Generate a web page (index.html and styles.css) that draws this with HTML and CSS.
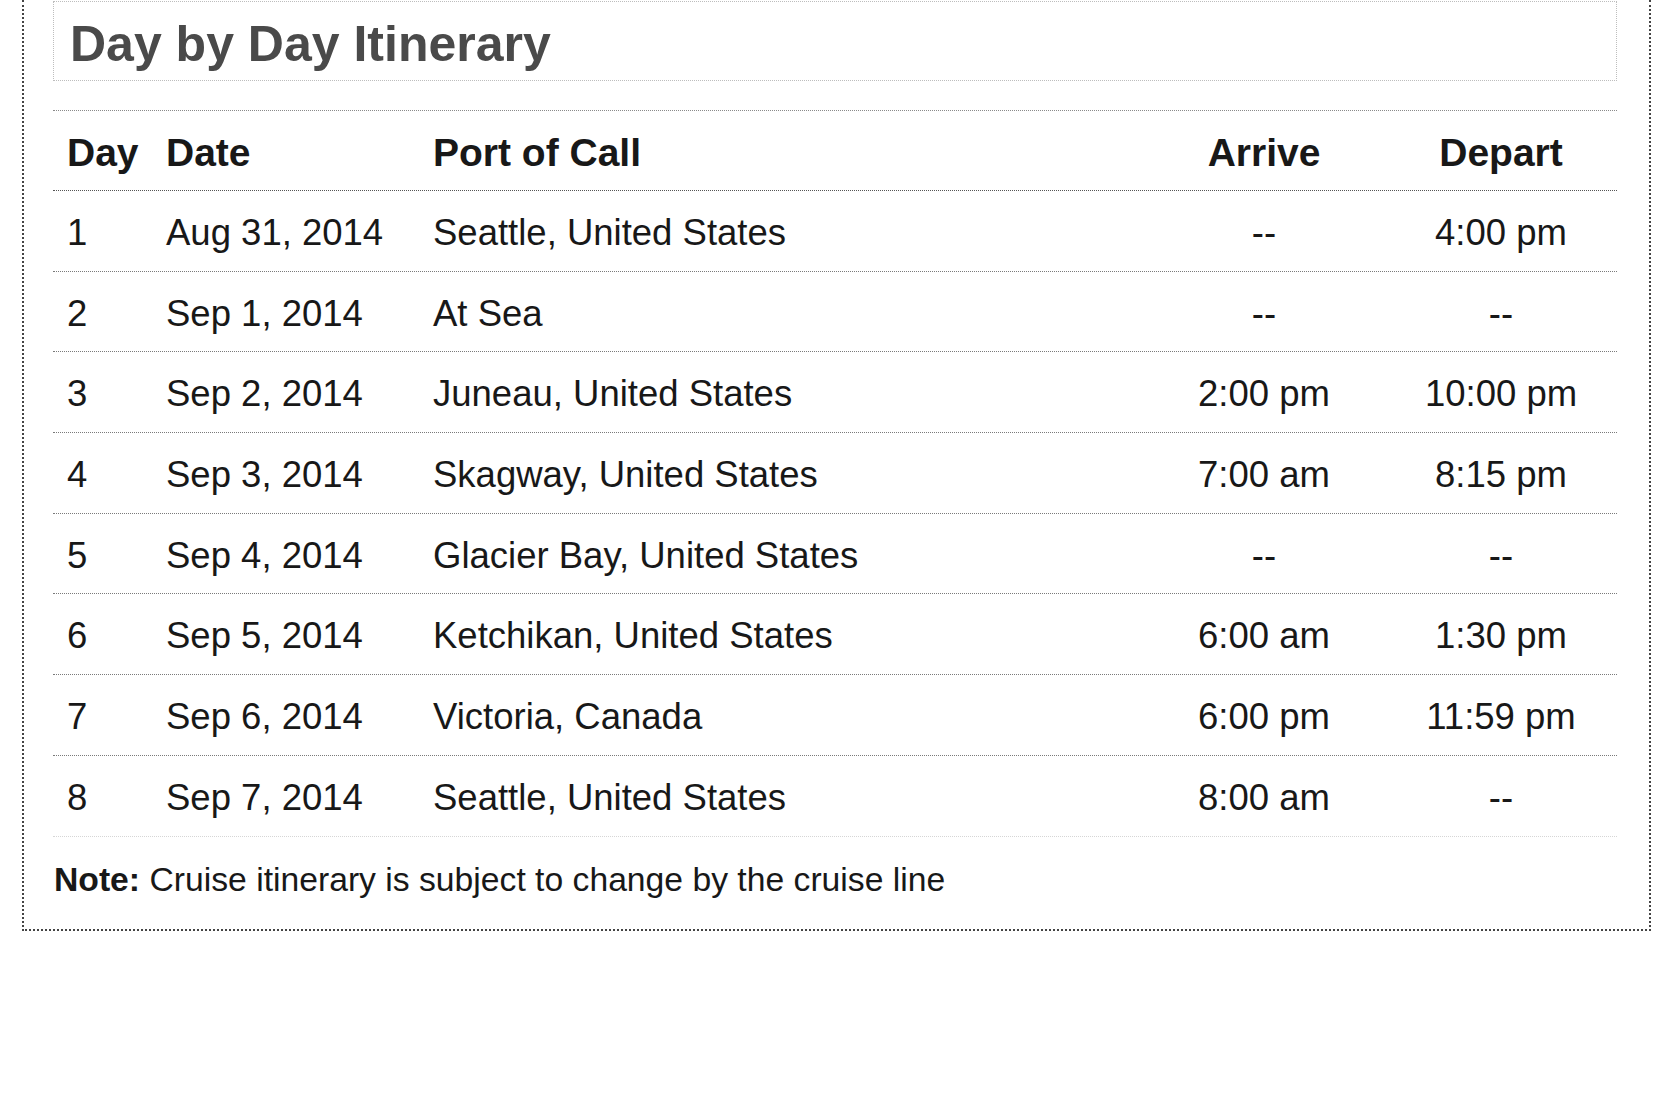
FILE: index.html
```html
<!DOCTYPE html>
<html lang="en">
<head>
<meta charset="utf-8">
<title>Day by Day Itinerary</title>
<link rel="stylesheet" href="styles.css">
</head>
<body>
<div class="sheet">
  <div class="title-box">
    <h1 class="title">Day by Day Itinerary</h1>
  </div>
  <div class="itinerary">
    <div class="row head">
      <div class="cell">Day</div>
      <div class="cell">Date</div>
      <div class="cell">Port of Call</div>
      <div class="cell center">Arrive</div>
      <div class="cell center">Depart</div>
    </div>
    <div class="row">
      <div class="cell">1</div>
      <div class="cell">Aug 31, 2014</div>
      <div class="cell">Seattle, United States</div>
      <div class="cell center">--</div>
      <div class="cell center">4:00 pm</div>
    </div>
    <div class="row">
      <div class="cell">2</div>
      <div class="cell">Sep 1, 2014</div>
      <div class="cell">At Sea</div>
      <div class="cell center">--</div>
      <div class="cell center">--</div>
    </div>
    <div class="row">
      <div class="cell">3</div>
      <div class="cell">Sep 2, 2014</div>
      <div class="cell">Juneau, United States</div>
      <div class="cell center">2:00 pm</div>
      <div class="cell center">10:00 pm</div>
    </div>
    <div class="row">
      <div class="cell">4</div>
      <div class="cell">Sep 3, 2014</div>
      <div class="cell">Skagway, United States</div>
      <div class="cell center">7:00 am</div>
      <div class="cell center">8:15 pm</div>
    </div>
    <div class="row">
      <div class="cell">5</div>
      <div class="cell">Sep 4, 2014</div>
      <div class="cell">Glacier Bay, United States</div>
      <div class="cell center">--</div>
      <div class="cell center">--</div>
    </div>
    <div class="row">
      <div class="cell">6</div>
      <div class="cell">Sep 5, 2014</div>
      <div class="cell">Ketchikan, United States</div>
      <div class="cell center">6:00 am</div>
      <div class="cell center">1:30 pm</div>
    </div>
    <div class="row">
      <div class="cell">7</div>
      <div class="cell">Sep 6, 2014</div>
      <div class="cell">Victoria, Canada</div>
      <div class="cell center">6:00 pm</div>
      <div class="cell center">11:59 pm</div>
    </div>
    <div class="row last">
      <div class="cell">8</div>
      <div class="cell">Sep 7, 2014</div>
      <div class="cell">Seattle, United States</div>
      <div class="cell center">8:00 am</div>
      <div class="cell center">--</div>
    </div>
  </div>
  <p class="note"><strong>Note:</strong> Cruise itinerary is subject to change by the cruise line</p>
</div>
</body>
</html>
```
FILE: styles.css
```css
html, body {
  margin: 0;
  padding: 0;
  background: #ffffff;
}

body {
  font-family: "Liberation Sans", Arial, "Helvetica", sans-serif;
  color: #181818;
}

.sheet {
  box-sizing: border-box;
  width: 1629px;
  margin-left: 22px;
  padding: 1px 32px 0 29px;
  border-left: 2px dotted #444;
  border-right: 2px dotted #444;
  border-bottom: 2px dotted #444;
  height: 931px;
}

.title-box {
  box-sizing: border-box;
  height: 80px;
  padding: 12px 0 0 16px;
  border: 1px dotted #bdbdbd;
}

.title {
  margin: 0;
  font-size: 50px;
  line-height: 60px;
  font-weight: bold;
  color: #4a4a4a;
}

.itinerary {
  margin-top: 29px;
  border-top: 1px dotted #8a8a8a;
}

.row {
  box-sizing: border-box;
  display: grid;
  grid-template-columns: 99px 267px 725px 240px 234px;
  align-items: center;
  height: 80.7px;
  padding-top: 4px;
  border-bottom: 1px dotted #7a7a7a;
  font-size: 36.5px;
  line-height: 42px;
}

.row.head {
  height: 80px;
  padding-top: 5px;
  font-size: 39px;
  font-weight: bold;
  border-bottom-color: #555;
}

.row.last {
  border-bottom-color: #d6d6d6;
}

.cell {
  padding-left: 14px;
  white-space: nowrap;
}

.cell.center {
  padding-left: 0;
  text-align: center;
}

.note {
  margin: 22px 0 0 1px;
  font-size: 33.7px;
  line-height: 40px;
  white-space: nowrap;
}

.note strong {
  font-weight: bold;
}
```
